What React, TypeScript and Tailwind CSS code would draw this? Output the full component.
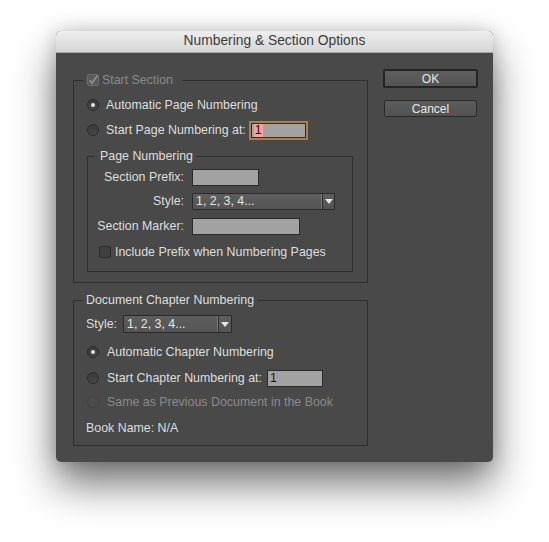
import React from 'react'

const font = { fontFamily: '"Liberation Sans", Arial, sans-serif' }

function Radio({ checked = false, disabled = false }: { checked?: boolean; disabled?: boolean }) {
    return (
        <span
            className={
                disabled
                    ? 'flex h-[12px] w-[12px] shrink-0 items-center justify-center rounded-full border border-[#444444] bg-[#4b4b4b]'
                    : 'flex h-[12px] w-[12px] shrink-0 items-center justify-center rounded-full border border-[#2a2a2a] bg-gradient-to-b from-[#3a3a3a] to-[#474747]'
            }
        >
            {checked && <span className="h-[4px] w-[4px] rounded-full bg-[#e2e2e2]" />}
        </span>
    )
}

function Checkbox({ checked = false, disabled = false }: { checked?: boolean; disabled?: boolean }) {
    return (
        <svg width="12" height="12" viewBox="0 0 12 12" className="shrink-0">
            <rect
                x="0.5"
                y="0.5"
                width="11"
                height="11"
                rx="1"
                fill={disabled ? '#5a5a5a' : '#3f3f3f'}
                stroke={disabled ? '#6e6e6e' : '#2a2a2a'}
            />
            {checked && (
                <path d="M2.5 6.2 L5 9 L10.5 1.5" fill="none" stroke={disabled ? '#8e8e8e' : '#e0e0e0'} strokeWidth="1.8" />
            )}
        </svg>
    )
}

function Select({ width, height, divider }: { width: string; height: string; divider: number }) {
    return (
        <div
            className={`${width} ${height} flex items-center rounded-[1px] border border-[#2a2a2a] bg-gradient-to-b from-[#5e5e5e] to-[#545454] text-[#e4e4e4]`}
        >
            <span className="flex-1 pl-[3px] leading-none">1, 2, 3, 4...</span>
            <span className="h-full w-[1px] bg-[#777777]" />
            <span className="h-full w-[1px] bg-[#2f2f2f]" />
            <span className="flex h-full items-center justify-center" style={{ width: divider }}>
                <svg width="8" height="5" viewBox="0 0 8 5">
                    <path d="M0 0 H8 L4 5 Z" fill="#e6e6e6" />
                </svg>
            </span>
        </div>
    )
}

function TextBox({ width, value }: { width: string; value?: string }) {
    return (
        <div className={`${width} flex h-[17px] items-center border border-[#2a2a2a] bg-[#a2a2a2] pl-[2px] text-[#1a1a1a]`}>
            {value}
        </div>
    )
}

export default function App() {
    return (
        <div className="h-[542px] w-[549px] bg-white pl-[56px] pt-[31px] text-[12.4px]" style={font}>
            <div className="flex h-[431px] w-[437px] flex-col overflow-hidden rounded-[5px] bg-[#494949] shadow-[0_22px_40px_rgba(0,0,0,0.55),0_0_18px_rgba(0,0,0,0.18)]">
                {/* title bar */}
                <div className="flex h-[22px] shrink-0 items-center justify-center border-b border-[#a6a6a6] bg-gradient-to-b from-[#eeeeee] to-[#d6d6d6] text-[13.8px] text-[#3c3c3c]">
                    Numbering &amp; Section Options
                </div>

                <div className="flex pl-[17px]">
                    <div className="w-[295px] pt-[19px] text-[#dedede]">
                        <fieldset className="border border-[#2e2e2e] pb-[10px]">
                            <legend className="ml-[9px] flex h-[16px] items-center gap-[3px] pl-[4px] pr-[10px] text-[#8a8a8a]">
                                <Checkbox checked disabled />
                                <span>Start Section</span>
                            </legend>
                            <div className="pl-[13px]">
                                <div className="mt-[7px] flex h-[20px] items-center gap-[7px]">
                                    <Radio checked />
                                    <span>Automatic Page Numbering</span>
                                </div>
                                <div className="mt-[5px] flex h-[20px] items-center">
                                    <Radio />
                                    <span className="ml-[7px]">Start Page Numbering at:</span>
                                    <div className="ml-[3px] flex h-[19px] w-[59px] items-center border-2 border-[#ad7d4c]">
                                        <div className="flex h-full w-full items-center border border-[#2c2c2c] bg-[#a2a2a2] pl-[2px]">
                                            <span className="bg-[#f2a3a3] px-[1px] leading-[13px] text-[#2a0a0a]">1</span>
                                        </div>
                                    </div>
                                </div>

                                <fieldset className="mt-[8px] w-[266px] border border-[#2e2e2e] pb-[11px]">
                                    <legend className="ml-[7px] h-[16px] pl-[5px] pr-[3px] leading-[16px]">Page Numbering</legend>
                                    <div className="mt-[5px] flex h-[17px] items-center gap-[8px]">
                                        <span className="w-[96px] text-right">Section Prefix:</span>
                                        <TextBox width="w-[67px]" />
                                    </div>
                                    <div className="mt-[7px] flex h-[17px] items-center gap-[8px]">
                                        <span className="w-[96px] text-right">Style:</span>
                                        <Select width="w-[143px]" height="h-[17px]" divider={11} />
                                    </div>
                                    <div className="mt-[8px] flex h-[17px] items-center gap-[8px]">
                                        <span className="w-[96px] text-right">Section Marker:</span>
                                        <TextBox width="w-[108px]" />
                                    </div>
                                    <div className="mt-[9px] flex h-[16px] items-center gap-[4px] pl-[11px]">
                                        <Checkbox />
                                        <span>Include Prefix when Numbering Pages</span>
                                    </div>
                                </fieldset>
                            </div>
                        </fieldset>

                        <fieldset className="mt-[9px] border border-[#2e2e2e] pb-[7px]">
                            <legend className="ml-[9px] h-[16px] px-[3px] leading-[16px]">Document Chapter Numbering</legend>
                            <div className="pl-[12px]">
                                <div className="mt-[7px] flex h-[18px] items-center gap-[6px]">
                                    <span>Style:</span>
                                    <Select width="w-[109px]" height="h-[18px]" divider={12} />
                                </div>
                                <div className="mt-[9px] flex h-[20px] items-center gap-[8px] pl-[1px]">
                                    <Radio checked />
                                    <span>Automatic Chapter Numbering</span>
                                </div>
                                <div className="mt-[6px] flex h-[20px] items-center pl-[1px]">
                                    <Radio />
                                    <span className="ml-[8px]">Start Chapter Numbering at:</span>
                                    <div className="ml-[5px]">
                                        <TextBox width="w-[56px]" value="1" />
                                    </div>
                                </div>
                                <div className="mt-[4px] flex h-[20px] items-center gap-[8px] pl-[1px] text-[#8a8a8a]">
                                    <Radio disabled />
                                    <span>Same as Previous Document in the Book</span>
                                </div>
                                <div className="mt-[6px] flex h-[20px] items-center">Book Name: N/A</div>
                            </div>
                        </fieldset>
                    </div>

                    <div className="ml-[15px] flex w-[95px] flex-col pt-[16px] text-[12px] text-[#e8e8e8]">
                        <button className="flex h-[19px] w-[95px] items-center justify-center rounded-[2px] border-2 border-[#242424] bg-gradient-to-b from-[#5e5e5e] to-[#535353]">
                            OK
                        </button>
                        <button className="ml-[1px] mt-[12px] flex h-[17px] w-[93px] items-center justify-center rounded-[2px] border border-[#2a2a2a] bg-gradient-to-b from-[#5c5c5c] to-[#525252]">
                            Cancel
                        </button>
                    </div>
                </div>
            </div>
        </div>
    )
}
